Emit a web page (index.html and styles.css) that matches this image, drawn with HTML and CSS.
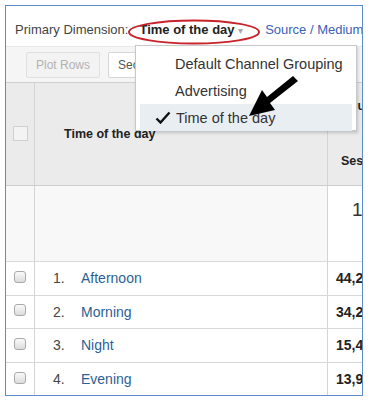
FILE: index.html
```html
<!DOCTYPE html>
<html lang="en">
<head>
    <meta charset="UTF-8">
    <meta name="viewport" content="width=device-width, initial-scale=1.0">
    <title>Primary Dimension</title>
    <link rel="stylesheet" href="styles.css">
</head>
<body>

<div class="frame">
    <div class="dimension-bar">
        <span class="label">Primary Dimension:</span>
        <span class="current">Time of the day <span class="caret">&#9662;</span></span>
        <a class="dim-link">Source / Medium</a>
    </div>

    <div class="toolbar">
        <button class="tool-btn disabled">Plot Rows</button>
        <button class="tool-btn">Secondary dimension</button>
    </div>

    <div class="report">
        <div class="row head">
            <div class="cell check"><span class="head-box"></span></div>
            <div class="cell dim">Time of the day</div>
            <div class="cell metric">
                <div class="group">Acquisition</div>
                <div class="metric-name">Sessions</div>
            </div>
        </div>
        <div class="row summary">
            <div class="cell check"></div>
            <div class="cell dim"></div>
            <div class="cell metric total">1</div>
        </div>
        <div class="row">
            <div class="cell check"><span class="box"></span></div>
            <div class="cell dim"><span class="num">1.</span><a class="name">Afternoon</a></div>
            <div class="cell metric value">44,218</div>
        </div>
        <div class="row">
            <div class="cell check"><span class="box"></span></div>
            <div class="cell dim"><span class="num">2.</span><a class="name">Morning</a></div>
            <div class="cell metric value">34,217</div>
        </div>
        <div class="row">
            <div class="cell check"><span class="box"></span></div>
            <div class="cell dim"><span class="num">3.</span><a class="name">Night</a></div>
            <div class="cell metric value">15,496</div>
        </div>
        <div class="row last">
            <div class="cell check"><span class="box"></span></div>
            <div class="cell dim"><span class="num">4.</span><a class="name">Evening</a></div>
            <div class="cell metric value">13,996</div>
        </div>
    </div>

    <div class="dropdown">
        <a class="dropdown-item">Default Channel Grouping</a>
        <a class="dropdown-item">Advertising</a>
        <a class="dropdown-item selected">
            <svg class="tick" width="16" height="13" viewBox="0 0 16 13">
                <path d="M1.5 7.5 L5.5 11.5 L14.5 1.5" fill="none" stroke="#111" stroke-width="2.4"/>
            </svg>Time of the day</a>
    </div>

    <!-- annotation marks drawn over the screenshot -->
    <svg class="mark-circle" width="136" height="28" viewBox="0 0 136 28">
        <ellipse cx="68" cy="14" rx="65" ry="11.5" fill="none" stroke="#c8232b" stroke-width="2"/>
    </svg>
    <svg class="mark-arrow" width="54" height="44" viewBox="0 0 54 44">
        <polygon points="51,5 46,0 20,21 15,14 2,40 28,34 23,27" fill="#000"/>
    </svg>
</div>

</body>
</html>
```

FILE: styles.css
```css
body {
    margin: 0;
    background-color: #fff;
    font-family: "Liberation Sans", Arial, sans-serif;
    color: #333;
}

.frame {
    position: relative;
    margin: 5px;
    width: 356px;
    height: 389px;
    border: 1px solid #5c8ccc;
    overflow: hidden;
    background-color: #fff;
}

.dimension-bar {
    height: 40px;
    display: flex;
    align-items: center;
    padding: 6px 0 0 9px;
    box-sizing: border-box;
    font-size: 13px;
    white-space: nowrap;
}

.label {
    color: #444;
}

.current {
    margin-left: 11px;
    font-weight: bold;
    color: #222;
}

.caret {
    color: #aaa;
    font-size: 10px;
    font-weight: normal;
}

.dim-link {
    margin-left: 22px;
    color: #3a62b8;
}

.toolbar {
    height: 36px;
    background-color: #f5f5f5;
    border-top: 1px solid #e8e8e8;
    box-sizing: border-box;
    display: flex;
    align-items: center;
    gap: 8px;
    padding-left: 20px;
}

.tool-btn {
    height: 26px;
    padding: 0 9px;
    font-family: "Liberation Sans", Arial, sans-serif;
    font-size: 12px;
    color: #555;
    background-color: #fff;
    border: 1px solid #d6d6d6;
    border-radius: 2px;
    white-space: nowrap;
}

.tool-btn.disabled {
    color: #b2b2b2;
    background-color: #f3f3f3;
    border-color: #e0e0e0;
}

.report {
    border-top: 1px solid #cfcfcf;
}

.row {
    display: grid;
    grid-template-columns: 29px 293px 120px;
    height: 33.5px;
    box-sizing: border-box;
    border-bottom: 1px solid #d8d8d8;
    font-size: 14px;
}

.row.last {
    border-bottom: none;
}

.cell {
    display: flex;
    align-items: center;
    border-right: 1px solid #d4d4d4;
    white-space: nowrap;
}

.check {
    justify-content: center;
}

.head {
    height: 103px;
    background-color: #ebebeb;
    border-bottom-color: #cdcdcd;
}

.head .dim {
    padding-left: 29px;
    font-size: 12.5px;
    font-weight: bold;
    color: #222;
}

.head .metric {
    flex-direction: column;
    align-items: flex-start;
    padding-left: 4px;
    font-size: 12.5px;
    font-weight: bold;
    color: #222;
}

.group {
    height: 46px;
    display: flex;
    align-items: center;
    padding-left: 2px;
}

.metric-name {
    margin-top: 25px;
    padding-left: 9px;
}

.head-box {
    width: 13px;
    height: 13px;
    margin-top: -2px;
    border: 1px solid #d0d0d0;
    background-color: #f3f3f3;
}

.summary {
    height: 76px;
    background-color: #f8f8f8;
    border-bottom-color: #dadada;
}

.summary .metric {
    background-color: #fff;
}

.total {
    align-items: flex-start;
    padding: 13px 0 0 24px;
    font-size: 19px;
    color: #333;
}

.box {
    width: 10px;
    height: 10px;
    margin-top: -3px;
    border: 1px solid #a9a9a9;
    border-radius: 3px;
    background: linear-gradient(#fafafa, #dcdcdc);
}

.dim {
    padding-left: 18px;
}

.num {
    width: 28px;
    color: #444;
}

.name {
    color: #2d5f95;
}

.value {
    padding-left: 8px;
    font-weight: bold;
    color: #222;
}

.dropdown {
    position: absolute;
    left: 129px;
    top: 39px;
    width: 222px;
    height: 86px;
    padding: 4px 4px 0 4px;
    box-sizing: border-box;
    background-color: #fff;
    border: 1px solid #c8c8c8;
    box-shadow: 1px 2px 3px rgba(0, 0, 0, 0.18);
}

.dropdown-item {
    display: flex;
    align-items: center;
    height: 27px;
    padding-left: 35px;
    font-size: 14.5px;
    color: #333;
    white-space: nowrap;
}

.dropdown-item.selected {
    padding-left: 15px;
    background-color: #e9eef2;
}

.tick {
    margin-right: 5px;
}

.mark-circle {
    position: absolute;
    left: 120px;
    top: 12px;
}

.mark-arrow {
    position: absolute;
    left: 241px;
    top: 70px;
}
```
